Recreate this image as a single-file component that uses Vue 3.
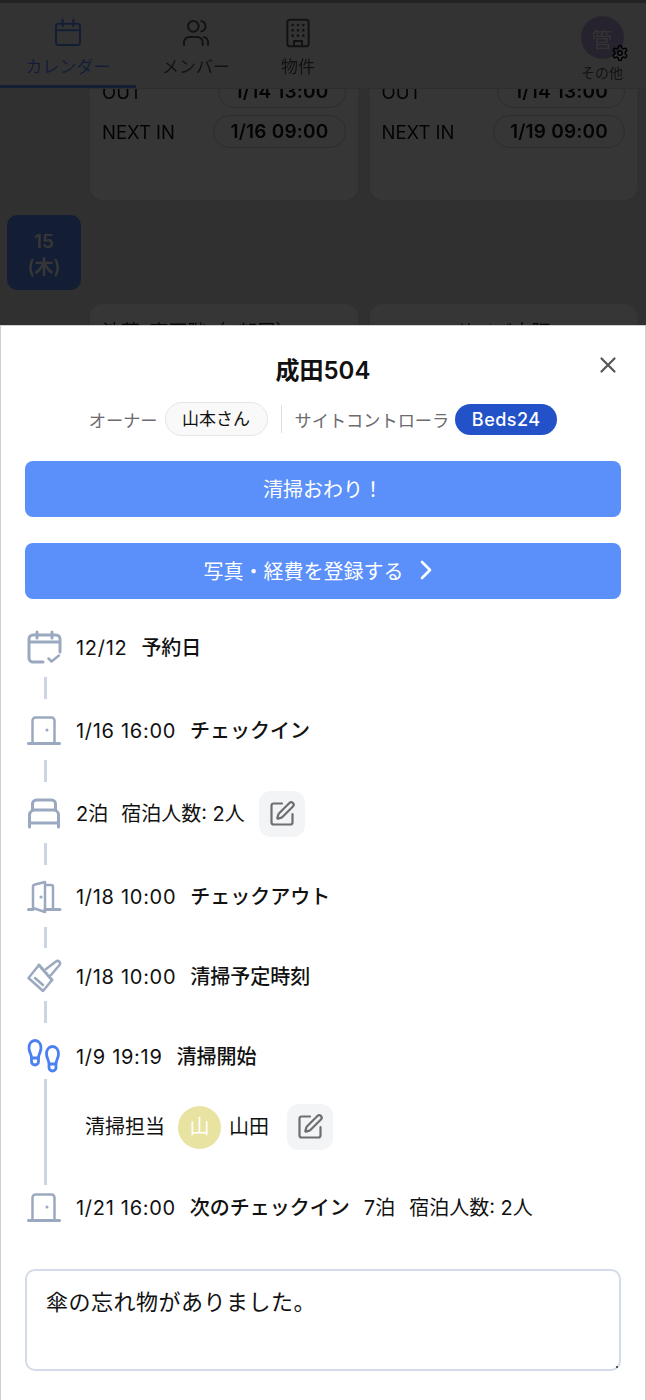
<template>
  <div class="page">
    <!-- 後ろのカレンダー画面 -->
    <div class="backdrop">
      <div class="calendar">
        <div class="day">
          <div class="day-side"></div>
          <div class="cards">
            <div v-for="card in cards" :key="card.next" class="card">
              <div class="time-row">
                <span>OUT</span>
                <span class="time-pill">1/14 13:00</span>
              </div>
              <div class="time-row">
                <span>NEXT IN</span>
                <span class="time-pill">{{ card.next }}</span>
              </div>
            </div>
          </div>
        </div>
        <div class="day-badge">15<br />(木)</div>
        <div class="cards next-cards">
          <div class="card card-title">渋草*高円階（4部屋）LA501</div>
          <div class="card card-title">サイバ大阪</div>
        </div>
      </div>

      <header class="nav">
        <div class="tab active">
          <svg viewBox="0 0 24 24" width="32" height="32" class="tab-icon">
            <rect x="3" y="5" width="18" height="16" rx="2" />
            <path d="M8 2v5M16 2v5M3 10h18" />
          </svg>
          <span>カレンダー</span>
        </div>
        <div class="tab members">
          <svg viewBox="0 0 24 24" width="32" height="32" class="tab-icon">
            <circle cx="10" cy="7" r="4" />
            <path d="M3 21v-2a4 4 0 0 1 4-4h6a4 4 0 0 1 4 4v2M16 3.100a4 4 0 0 1 0 7.800M21 21v-2a4 4 0 0 0-3-3.900" />
          </svg>
          <span>メンバー</span>
        </div>
        <div class="tab property">
          <svg viewBox="0 0 24 24" width="32" height="32" class="tab-icon">
            <rect x="4" y="2" width="16" height="20" rx="2" />
            <path d="M9 22v-4h6v4" />
            <path class="dots" d="M8 6h.01M12 6h.01M16 6h.01M8 10h.01M12 10h.01M16 10h.01M8 14h.01M12 14h.01M16 14h.01" />
          </svg>
          <span>物件</span>
        </div>
        <div class="more">
          <div class="admin">管</div>
          <svg viewBox="0 0 24 24" width="18" height="18" class="gear">
            <path d="M12.200 2h-.4a2 2 0 0 0-2 2v.2a2 2 0 0 1-1 1.700l-.4.3a2 2 0 0 1-2 0l-.2-.1a2 2 0 0 0-2.700.7l-.2.4a2 2 0 0 0 .7 2.700l.2.1a2 2 0 0 1 1 1.700v.5a2 2 0 0 1-1 1.700l-.2.1a2 2 0 0 0-.7 2.700l.2.4a2 2 0 0 0 2.700.7l.2-.1a2 2 0 0 1 2 0l.4.3a2 2 0 0 1 1 1.700v.2a2 2 0 0 0 2 2h.4a2 2 0 0 0 2-2v-.2a2 2 0 0 1 1-1.700l.4-.3a2 2 0 0 1 2 0l.2.1a2 2 0 0 0 2.700-.7l.2-.4a2 2 0 0 0-.7-2.700l-.2-.1a2 2 0 0 1-1-1.700v-.5a2 2 0 0 1 1-1.700l.2-.1a2 2 0 0 0 .7-2.700l-.2-.4a2 2 0 0 0-2.700-.7l-.2.1a2 2 0 0 1-2 0l-.4-.3a2 2 0 0 1-1-1.700V4a2 2 0 0 0-2-2z" />
            <circle cx="12" cy="12" r="3" />
          </svg>
          <span>その他</span>
        </div>
      </header>
    </div>
    <div class="overlay"></div>

    <!-- 詳細シート -->
    <section class="sheet">
      <button class="close" aria-label="close">
        <svg viewBox="0 0 20 20" width="20" height="20">
          <path d="M3.500 3.500l13 13M16.500 3.500l-13 13" />
        </svg>
      </button>
      <h2 class="title">成田504</h2>
      <div class="meta">
        <span class="meta-label">オーナー</span>
        <span class="owner-chip">山本さん</span>
        <span class="divider"></span>
        <span class="meta-label">サイトコントローラ</span>
        <span class="site-chip">Beds24</span>
      </div>

      <button class="action first">清掃おわり！</button>
      <button class="action second">
        写真・経費を登録する
        <svg viewBox="0 0 14 20" width="14" height="20">
          <path d="M3 2l8 8-8 8" />
        </svg>
      </button>

      <div class="timeline">
        <div class="row">
          <svg class="tl-icon" viewBox="0 0 36 34" width="36" height="34">
            <path d="M16 31H6a4 4 0 0 1-4-4V8a4 4 0 0 1 4-4h23a4 4 0 0 1 4 4v13M2 11h31M10 1v6M25 1v6" />
            <path class="thin" d="M21.500 27.500l3 3 7.500-6" />
          </svg>
          <span class="when">12/12</span><strong class="label">予約日</strong>
        </div>
        <div class="dash"></div>
        <div class="row">
          <svg class="tl-icon" viewBox="0 0 36 34" width="36" height="34">
            <path class="thin" d="M5.500 29V6.500a3 3 0 0 1 3-3h16a3 3 0 0 1 3 3V29" />
            <path d="M1.500 29.500h31" />
            <circle class="dot" cx="20" cy="16" r="1.500" />
          </svg>
          <span class="when">1/16 16:00</span><strong class="label">チェックイン</strong>
        </div>
        <div class="dash"></div>
        <div class="row">
          <svg class="tl-icon" viewBox="0 0 36 34" width="36" height="34">
            <path d="M5.500 13V7a4 4 0 0 1 4-4h15a4 4 0 0 1 4 4v6M2.500 30V18a5 5 0 0 1 5-5h19a5 5 0 0 1 5 5v12M2.500 26h29" />
          </svg>
          <span>2泊</span><span class="label tight">宿泊人数: 2人</span>
          <button class="edit wide">
            <svg viewBox="0 0 24 24" width="28" height="28">
              <path d="M12 3H5a2 2 0 0 0-2 2v14a2 2 0 0 0 2 2h14a2 2 0 0 0 2-2v-7" />
              <path d="M18.375 2.625a1 1 0 0 1 3 3l-9.013 9.014a2 2 0 0 1-.853.505l-2.873.84a.5.5 0 0 1-.62-.62l.84-2.873a2 2 0 0 1 .506-.852z" />
            </svg>
          </button>
        </div>
        <div class="dash"></div>
        <div class="row">
          <svg class="tl-icon" viewBox="0 0 36 34" width="36" height="34">
            <path class="thin" d="M6 28V6.500Q6 5 8 4.500L18 2v30L6 28zM18 5h6a2 2 0 0 1 2 2v22" />
            <path d="M1.500 29.500H6M18 29.500h15" />
            <circle class="dot" cx="14" cy="17" r="1.600" />
          </svg>
          <span class="when">1/18 10:00</span><strong class="label">チェックアウト</strong>
        </div>
        <div class="dash short"></div>
        <div class="row">
          <svg class="tl-icon" viewBox="0 0 36 34" width="36" height="34">
            <path class="thin" d="M19 9l10-7.500a2.500 2.500 0 0 1 3.500 3.500L24 15" />
            <path class="thin" d="M12 5L1.500 18 16 31l9-11" />
            <path d="M12 5l13 15" />
            <path class="thin" d="M8 18l8 7" />
          </svg>
          <span class="when">1/18 10:00</span><strong class="label">清掃予定時刻</strong>
        </div>
        <div class="dash last"></div>
        <div class="row">
          <svg class="tl-icon steps" viewBox="0 0 36 34" width="36" height="34">
            <g>
              <path d="M8 .5C12 .5 14 4 14 8c0 4-2.500 6-2.500 10v3.500a3.500 3.500 0 0 1-7 0V18C4.500 14 2 12 2 8 2 4 4 .5 8 .5zM4.500 18h7" />
            </g>
            <g transform="translate(17.500 6)">
              <path d="M8 .5C12 .5 14 4 14 8c0 4-2.500 6-2.500 10v3.500a3.500 3.500 0 0 1-7 0V18C4.500 14 2 12 2 8 2 4 4 .5 8 .5zM4.500 18h7" />
            </g>
          </svg>
          <span class="when">1/9 19:19</span><strong class="label">清掃開始</strong>
        </div>
        <div class="staff">
          <span>清掃担当</span>
          <span class="avatar">山</span>
          <span>山田</span>
          <button class="edit">
            <svg viewBox="0 0 24 24" width="28" height="28">
              <path d="M12 3H5a2 2 0 0 0-2 2v14a2 2 0 0 0 2 2h14a2 2 0 0 0 2-2v-7" />
              <path d="M18.375 2.625a1 1 0 0 1 3 3l-9.013 9.014a2 2 0 0 1-.853.505l-2.873.84a.5.5 0 0 1-.62-.62l.84-2.873a2 2 0 0 1 .506-.852z" />
            </svg>
          </button>
        </div>
        <div class="row">
          <svg class="tl-icon" viewBox="0 0 36 34" width="36" height="34">
            <path class="thin" d="M5.500 29V6.500a3 3 0 0 1 3-3h16a3 3 0 0 1 3 3V29" />
            <path d="M1.500 29.500h31" />
            <circle class="dot" cx="20" cy="16" r="1.500" />
          </svg>
          <span class="when">1/21 16:00</span><strong class="label">次のチェックイン</strong>
          <span class="label">7泊</span><span class="label">宿泊人数: 2人</span>
        </div>
      </div>

      <div class="memo-wrap">
        <textarea class="memo" v-model="memo"></textarea>
      </div>
    </section>
  </div>
</template>

<script setup>
import { ref } from 'vue'

const cards = [{ next: '1/16 09:00' }, { next: '1/19 09:00' }]
const memo = ref('傘の忘れ物がありました。')
</script>

<style>
html,
body {
  margin: 0;
  background: #fff;
}
</style>

<style scoped>
.page {
  position: relative;
  width: 646px;
  height: 1400px;
  overflow: hidden;
  font-family: Inter, "Noto Sans CJK JP", sans-serif;
  color: #111;
}

button {
  font-family: inherit;
  border: none;
  cursor: pointer;
}

svg {
  fill: none;
  stroke: currentColor;
  stroke-linecap: round;
  stroke-linejoin: round;
  flex: none;
  overflow: visible;
}

.backdrop {
  height: 326px;
  overflow: hidden;
  background: #e2e4e8;
  position: relative;
  filter: blur(0.5px);
}

.overlay {
  position: absolute;
  inset: 0;
  height: 326px;
  background: rgba(0, 0, 0, 0.79);
  border-top: 3px solid #222;
  box-sizing: border-box;
}

.nav {
  position: absolute;
  top: 0;
  left: 0;
  right: 0;
  height: 89px;
  background: #f2f2f2;
  border-bottom: 1px solid #d8d8d8;
  box-sizing: border-box;
}

.tab {
  position: absolute;
  top: 0;
  bottom: 0;
  display: flex;
  flex-direction: column;
  align-items: center;
  padding-top: 17px;
  gap: 4px;
  font-size: 17px;
  color: #555;
  box-sizing: border-box;
}

.tab-icon {
  stroke-width: 1.500;
}

.tab.active {
  left: 0;
  width: 136px;
  color: #5b8ff9;
  border-bottom: 3px solid #5b8ff9;
}

.tab.members {
  left: 146px;
  width: 100px;
}

.tab.property {
  left: 268px;
  width: 60px;
}

.dots {
  stroke-width: 2;
}

.more {
  position: absolute;
  right: 14px;
  top: 16px;
  width: 60px;
  display: flex;
  flex-direction: column;
  align-items: center;
  font-size: 14px;
  color: #555;
}

.admin {
  width: 43px;
  height: 43px;
  border-radius: 50%;
  background: #b9a4d8;
  color: #eee;
  font-size: 21px;
  display: flex;
  align-items: center;
  justify-content: center;
  margin-bottom: 3px;
}

.gear {
  position: absolute;
  top: 28px;
  right: 3px;
  color: #000;
  stroke-width: 2;
}

.calendar {
  padding-top: 64px;
}

.day {
  display: flex;
}

.day-side {
  width: 89px;
  flex: none;
}

.cards {
  display: flex;
  gap: 10px;
}

.card {
  width: 269.500px;
  flex: none;
  box-sizing: border-box;
  background: #fff;
  border: 1px solid #e6e7ea;
  border-radius: 14px;
  padding: 0 12px;
  height: 137px;
  box-shadow: 0 1px 3px rgba(0, 0, 0, 0.06);
}

.time-row {
  display: flex;
  align-items: center;
  justify-content: space-between;
  height: 33px;
  margin-bottom: 7px;
  font-size: 18.500px;
}

.time-row:first-child {
  margin-top: 10px;
}

.time-pill {
  border: 1px solid #c9ccd2;
  border-radius: 17px;
  height: 33px;
  line-height: 31px;
  box-sizing: border-box;
  padding: 0 16px;
  font-weight: 600;
  font-size: 19px;
  letter-spacing: 0.2px;
}

.day-badge {
  width: 74px;
  height: 75px;
  margin: 14px 0 0 7px;
  border-radius: 10px;
  background: #5b8ff9;
  color: #fff;
  font-size: 19px;
  font-weight: 600;
  line-height: 26px;
  text-align: center;
  padding-top: 14px;
  box-sizing: border-box;
}

.next-cards {
  margin: 13px 0 0 89px;
}

.card-title {
  font-size: 19px;
  padding-top: 13px;
  text-align: center;
  white-space: nowrap;
}

.sheet {
  position: absolute;
  top: 325px;
  left: 0;
  right: 0;
  bottom: 0;
  background: #fff;
  border: 1px solid #cfcfcf;
  border-bottom: none;
  box-sizing: border-box;
  padding: 0 24px;
}

.close {
  position: absolute;
  top: 29px;
  right: 27px;
  width: 20px;
  height: 20px;
  padding: 0;
  background: none;
  color: #555;
}

.close svg {
  stroke-width: 2.200;
}

.title {
  margin: 30px 0 0;
  text-align: center;
  font-size: 24px;
  line-height: 30px;
  font-weight: 600;
}

.meta {
  margin-top: 16px;
  height: 34px;
  display: flex;
  align-items: center;
  justify-content: center;
  font-size: 17.200px;
}

.meta-label {
  color: #6b6b70;
}

.owner-chip {
  margin-left: 7px;
  height: 34px;
  line-height: 32px;
  width: 103px;
  box-sizing: border-box;
  text-align: center;
  background: #f9f9f9;
  border: 1px solid #e5e5e5;
  border-radius: 17px;
  font-size: 17px;
}

.divider {
  width: 1px;
  height: 28px;
  background: #dedede;
  margin: 0 13px;
}

.site-chip {
  margin-left: 6px;
  width: 102px;
  height: 31px;
  line-height: 31px;
  text-align: center;
  background: #2352c8;
  color: #fff;
  border-radius: 16px;
  font-size: 18px;
  letter-spacing: 0.5px;
  font-weight: 500;
}

.action {
  display: flex;
  align-items: center;
  justify-content: center;
  gap: 15px;
  width: 596px;
  height: 56px;
  padding: 0 0 2px;
  background: #5b8ff9;
  color: #fff;
  border-radius: 8px;
  font-size: 20px;
}

.action svg {
  stroke-width: 2.600;
}

.action.first {
  margin-top: 25px;
}

.action.second {
  margin-top: 26px;
  padding-right: 10px;
}

.timeline {
  margin-top: 32px;
  font-size: 20px;
  line-height: 30px;
}

.row {
  display: flex;
  align-items: center;
  height: 34px;
  white-space: nowrap;
}

.when {
  letter-spacing: 0.7px;
}

.tl-icon {
  margin: 0 13px 0 2px;
  color: #9aa9c0;
  stroke-width: 3;
}

.tl-icon .thin {
  stroke-width: 2.500;
}

.tl-icon .dot {
  fill: currentColor;
  stroke: none;
}

.tl-icon.steps {
  color: #4a80f0;
  stroke-width: 2.800;
}

.label {
  margin-left: 14px;
  font-weight: 400;
}

.label.tight {
  margin-left: 13px;
}

strong.label {
  font-weight: 500;
}

.edit {
  width: 46px;
  height: 46px;
  flex: none;
  margin: -6px 0 -6px 13px;
  background: #f3f4f6;
  border-radius: 12px;
  padding: 0;
  color: #6e6e72;
  display: flex;
  align-items: center;
  justify-content: center;
}

.edit.wide {
  margin-left: 14px;
}

.edit svg {
  stroke-width: 1.900;
}

.dash {
  width: 3px;
  height: 22px;
  margin: 12px 0 15px 19px;
  background: #cbd5e1;
}

.dash.short {
  margin: 13px 0 12px 19px;
  height: 21px;
}

.dash.last {
  margin: 7px 0 17px 19px;
}

.staff {
  display: flex;
  align-items: center;
  height: 106px;
  margin: 5px 0 6px 19px;
  border-left: 3px solid #cbd5e1;
  padding: 0 0 10px 38px;
  box-sizing: border-box;
}

.avatar {
  width: 43px;
  height: 43px;
  border-radius: 50%;
  background: #e8e3a0;
  color: #fff;
  margin: 0 8px 0 13px;
  display: flex;
  align-items: center;
  justify-content: center;
}

.staff .edit {
  margin-left: 18px;
}

.memo-wrap {
  position: relative;
  margin-top: 44px;
  width: 596px;
}

.memo-wrap::after {
  content: "";
  position: absolute;
  right: 3px;
  bottom: 3px;
  width: 2px;
  height: 2px;
  background: #555;
}

.memo {
  display: block;
  width: 596px;
  height: 102px;
  box-sizing: border-box;
  border: 2px solid #d3dbe8;
  border-radius: 10px;
  padding: 15px 19px;
  font-family: inherit;
  font-size: 22px;
  letter-spacing: 0.5px;
  line-height: 32px;
  color: #111;
  outline: none;
  resize: none;
}
</style>
